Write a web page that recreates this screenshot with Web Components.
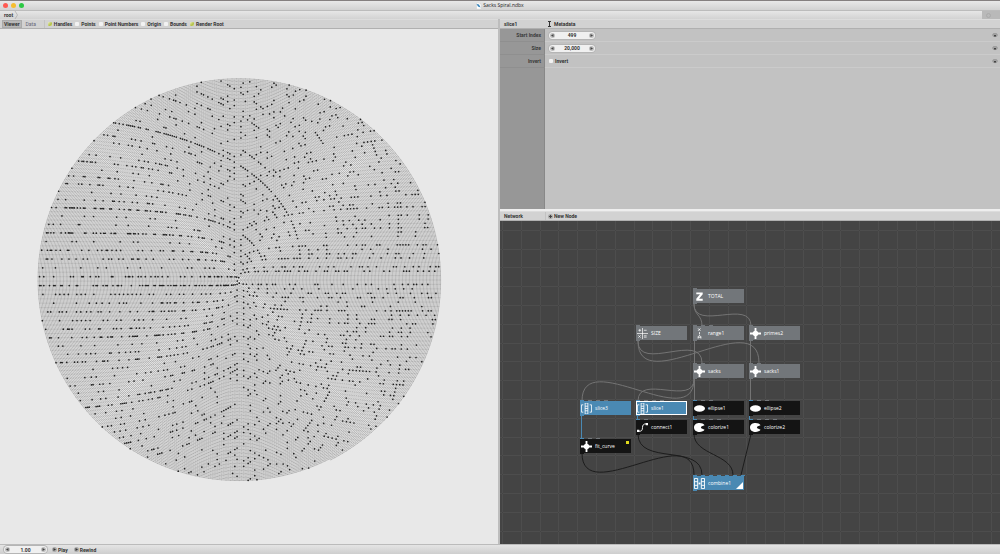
<!DOCTYPE html>
<html lang="en">
<head>
<meta charset="utf-8">
<title>Sacks Spiral.ndbx</title>
<style>
html, body { margin: 0; height: 100%; }
body { font: bold 5px/6px Roboto, sans-serif; color: #333; background: #e8e8e8; overflow: hidden; }
</style>
</head>
<body>
<nb-app></nb-app>
<script>
const define = (name, html, setup) => {
  const t = document.createElement('template');
  t.innerHTML = html;
  customElements.define(name, class extends HTMLElement {
    connectedCallback() {
      if (this.shadowRoot) return;
      this.attachShadow({ mode: 'open' }).append(t.content.cloneNode(true));
      if (setup) setup.call(this, this.shadowRoot);
    }
  });
};

define('nb-titlebar', `
<style>
:host { display: grid; grid-template-columns: 1fr auto 1fr; align-items: center; height: 9px; border-top: 1px solid #858080; background: linear-gradient(#e8e8e8, #d2d2d2); font: 5px/7px "Open Sans", sans-serif; color: #222; }
.lights { display: flex; gap: 3px; padding-left: 3px; }
button { width: 5px; height: 5px; padding: 0; border: 0; border-radius: 50%; background: #ff5a52; }
button:nth-child(2) { background: #f6bd2f; }
button:nth-child(3) { background: #2cc944; }
.t { display: flex; gap: 2px; align-items: center; }
</style>
<div class="lights"><button aria-label="Close"></button><button aria-label="Minimize"></button><button aria-label="Zoom"></button></div>
<div class="t"><svg width="5" height="6" viewBox="0 0 10 12"><path d="M1 0h6l3 3v9H1z" fill="#fff" stroke="#bbb" stroke-width=".6"/><path d="M1 2l5 1 3 6-5-2z" fill="#2f7fb8"/></svg><span><slot></slot></span></div>
<div></div>`);

define('nb-address', `
<style>
:host { display: flex; height: 9px; background: linear-gradient(#e6e6e6, #d2d2d2); border-top: 1px solid #bcbcbc; box-sizing: border-box; align-items: stretch; }
a { color: inherit; text-decoration: none; line-height: 8px; padding-left: 4px; }
svg { display: block; }
.sp { margin-left: auto; width: 18px; background: #b9b9b9; display: flex; align-items: center; }
.sp svg { margin-left: 4px; }
</style>
<a href="#root"><slot></slot></a>
<svg width="5" height="8" viewBox="0 0 5 8"><path d="M2 0L4.500 4L2 8" fill="none" stroke="#aaa" stroke-width=".7"/></svg>
<div class="sp"><svg width="5" height="5" viewBox="0 0 10 10"><circle cx="5" cy="5" r="4" fill="none" stroke="#a5a5a5" stroke-width="1.500"/></svg></div>`);

define('nb-header', `
<style>
:host { display: flex; align-items: center; height: 10px; box-sizing: border-box; background: #d2d2d2; border-top: 1px solid #dcdcdc; border-bottom: 1px solid #b0b0b0; }
</style><slot></slot>`);

define('nb-tab', `
<style>
:host { display: flex; align-self: stretch; }
button { font: inherit; font-weight: 400; color: #667; border: 0; padding: 0 4px; background: none; line-height: 8px; }
:host([on]) button { font-weight: bold; background: #b8b8b8; color: #333; outline: 1px solid #aaa; outline-offset: -1px; padding: 0 2px; }
</style><button><slot></slot></button>`);

define('nb-check', `
<style>
:host { display: flex; }
label { display: flex; align-items: center; gap: 2px; line-height: 7px; white-space: nowrap; }
input { appearance: none; margin: 0; width: 4px; height: 4px; background: #f2f2f2; border-radius: 1px; box-sizing: border-box; }
input:checked { background: linear-gradient(135deg, #eef0c8, #b4c24a 60%, #d6dd90); }
</style><label><input type="checkbox"><span><slot></slot></span></label>`,
function (r) { r.querySelector('input').checked = this.hasAttribute('on'); });

define('nb-number', `
<style>
:host { display: flex; width: 46px; height: 7px; border-radius: 4px; background: #f0f0f0; box-shadow: 0 0 0 1px #b5b5b5; align-items: center; box-sizing: border-box; padding: 0 1px; }
input { flex: 1; min-width: 0; border: 0; padding: 0; background: none; font: inherit; color: inherit; text-align: center; height: 7px; }
button { width: 5px; height: 5px; border: 0; padding: 0; border-radius: 50%; background: #bdbdbd; flex: none; display: grid; place-items: center; }
svg { display: block; }
</style>
<button aria-label="Decrease"><svg width="3" height="3" viewBox="0 0 3 3"><path d="M2.500 0v3L0 1.500z" fill="#444"/></svg></button>
<input type="text">
<button aria-label="Increase"><svg width="3" height="3" viewBox="0 0 3 3"><path d="M.5 0v3L3 1.500z" fill="#444"/></svg></button>`,
function (r) { const i = r.querySelector('input'); i.value = this.getAttribute('value'); i.setAttribute('aria-label', this.getAttribute('label')); });

define('nb-row', `
<style>
:host { display: grid; grid-template-columns: 45px 1fr 8px; height: 13px; align-items: stretch; }
.l { background: #979797; border-bottom: 1px solid #8f8f8f; color: #3a3a3a; text-align: right; padding-right: 3px; line-height: 13px; height: 12px; border-right: 1px solid #888; }
.c { display: flex; align-items: center; padding-left: 4px; }
.c, .e { border-bottom: 1px solid #cbcbcb; }
.e { display: flex; align-items: center; }
</style>
<div class="l"></div><div class="c"><slot></slot></div>
<div class="e"><svg width="6" height="5" viewBox="0 0 6 5"><ellipse cx="3" cy="2" rx="2.500" ry="1.700" fill="#a2a2a2" stroke="#8a8a8a" stroke-width=".5"/><path d="M2 2h2v1.500H2z" fill="#444"/></svg></div>`,
function (r) { r.querySelector('.l').textContent = this.getAttribute('label'); });

define('nb-spiral', `
<style>
:host { display: block; flex: 1; min-height: 0; }
div { height: 100%; box-sizing: border-box; display: flex; align-items: center; justify-content: center; padding: 0 20px 14px 0; background: #e8e8e8; }
svg { width: 406px; max-width: 100%; display: block; }
path { fill: none; stroke-linecap: round; }
</style>
<div><svg viewBox="-144 -144 288 288" role="img" aria-label="Sacks spiral">
<path id="line" stroke="#222" stroke-width=".16"/>
<path id="pts" stroke="#a6a6a6" stroke-width=".6"/>
<path id="primes" stroke="#222" stroke-width="1.200"/>
</svg></div>`,
function (r) {
  const N = 20499, composite = new Uint8Array(N + 1);
  let line = '', pts = '', primes = '';
  for (let n = 1; n <= N; n++) {
    const s = Math.sqrt(n), a = s * 2 * Math.PI;
    const p = (s * Math.cos(a)).toFixed(2) + ' ' + (s * Math.sin(a)).toFixed(2);
    line += (n === 1 ? 'M' : 'L') + p;
    pts += 'M' + p + 'h0';
    if (n > 1 && !composite[n]) {
      primes += 'M' + p + 'h0';
      for (let m = n * n; m <= N; m += n) composite[m] = 1;
    }
  }
  r.getElementById('line').setAttribute('d', line);
  r.getElementById('pts').setAttribute('d', pts);
  r.getElementById('primes').setAttribute('d', primes);
});

const ICONS = {
  z: '<path d="M5 3h14v4l-8 10h8v4H5v-4l8-10H5z" fill="#fff"/>',
  math: '<path d="M12 0v24M0 12h24" stroke-width="1.500"/><path d="M3 5h6M6 2v6M15 5h6M3 16l5 5M8 16l-5 5M15 17h6M15 20h6" stroke-width="1.500"/>',
  range: '<path d="M9 1l5 5M14 1l-5 5M12 9v5M9 23v-4l3-3 3 3v4M9 20h6" stroke-width="1.800"/>',
  star: '<circle cx="12" cy="12" r="6" fill="#fff"/><path d="M10 0h4v24h-4zM0 10h24v4H0z" fill="#fff"/>',
  slice: '<path d="M9 0h6v24H9zM9 7h6M9 12h6M9 17h6" stroke-width="1.800"/><path d="M5 4H1v16h4M19 4h4v16h-4" stroke-width="1.800"/>',
  ellipse: '<ellipse cx="12" cy="12" rx="12" ry="7" fill="#fff"/>',
  connect: '<path d="M3 20c7 1 9-2 9-8 0-5 2-8 8-8" stroke-width="2"/><path d="M0 17h5v5H0zM19 2h5v5h-5z" fill="#fff"/>',
  colorize: '<path d="M23 7C19 0 0 0 0 12s19 12 23 5l-8-4 1-3z" fill="#fff"/>',
  combine: '<path d="M1 1h7v22H1zM1 8h7M1 16h7M16 1h7v22h-7zM16 8h7M16 16h7" stroke-width="2"/><path d="M10 10h4v4h-4z" fill="#fff"/>'
};

define('nb-node', `
<style>
:host { display: flex; position: absolute; width: 51px; height: 14px; box-sizing: border-box; align-items: center; gap: 3px; padding-left: 1px; background: var(--c, #72767a); color: #fff; font: 5px/7px "Open Sans", sans-serif; }
:host([kind=geo]) { --c: #141414; }
:host([kind=list]) { --c: #4a89b3; }
:host([selected]) { outline: 1px solid #fff; outline-offset: -1px; }
.ports { position: absolute; left: 0; bottom: 100%; display: flex; gap: 4px; }
.ports i, .out { width: 4px; height: 1px; background: var(--p, #72767a); }
:host([kind]) .ports i:first-child { background: #4a89b3; }
.out { position: absolute; left: 0; top: 100%; background: var(--c, #72767a); }
.flag { position: absolute; right: 2px; top: 2px; width: 3px; height: 3px; background: #e0d91c; }
.render { position: absolute; right: 1px; bottom: 1px; }
svg { display: block; flex: none; }
.ic { fill: none; stroke: #fff; stroke-width: 1.500; }
.ic [fill] { stroke: none; }
</style>
<div class="ports"></div><svg class="ic" width="11" height="11" viewBox="0 0 24 24"></svg><span><slot></slot></span><div class="out"></div>`,
function (r) {
  r.querySelector('.ic').innerHTML = ICONS[this.getAttribute('icon')];
  r.querySelector('.ports').innerHTML = '<i></i>'.repeat(+this.getAttribute('in'));
  const [x, y] = this.getAttribute('at').split(',');
  this.style.left = x + 'px'; this.style.top = y + 'px';
  if (this.hasAttribute('flag')) r.append(Object.assign(document.createElement('div'), { className: 'flag' }));
  if (this.hasAttribute('render')) r.querySelector('.out').insertAdjacentHTML('afterend', '<svg class="render" width="7" height="7" viewBox="0 0 7 7"><path d="M7 0v7H0z" fill="#fff"/></svg>');
});

define('nb-network', `
<style>
:host { display: block; flex: 1; min-height: 0; position: relative; overflow: hidden; background: #444; }
#bg { position: absolute; inset: 0; width: 100%; height: 100%; }
.w { fill: none; stroke: #747474; stroke-width: 1; }
.k { fill: none; stroke: #1c1c1c; stroke-width: 1; }
.b { fill: none; stroke: #4a89b3; stroke-width: 1; }
</style>
<svg id="bg">
<defs><pattern id="g" x="2" y="9" width="94" height="94" patternUnits="userSpaceOnUse"><path d="M0 0h1v94H0zM19 0h1v94h-1zM38 0h1v94h-1zM56 0h1v94h-1zM75 0h1v94h-1zM0 0v1h94V0zM0 19v1h94v-1zM0 37v1h94v-1zM0 56v1h94v-1zM0 75v1h94v-1z" fill="#4d4d4d"/></pattern></defs>
<rect width="100%" height="100%" fill="url(#g)"/>
<g class="w">
<path d="M194 83C194 95 202 93 202 105M194 83C194 111 251 77 251 105"/>
<path d="M138 120C138 152 202 110 202 142M138 120C138 180 259 82 259 142"/>
<path d="M194.500 120V142M250.500 120V142M194.500 158V180M250.500 158V180"/>
<path d="M194 158C194 186 138 152 138 180M194 158C194 214 82 124 82 180"/>
</g>
<g class="b"><path d="M81.500 194V217M137.500 194V199M193.500 194V199M249.500 194V199"/></g>
<g class="k">
<path d="M138 213C138 245 202 222 202 254M194 213C194 234 233 233 233 254M251 213L241 254"/>
<path d="M82 232C82 288 194 198 194 254"/>
</g>
</svg><slot></slot>`);

define('nb-app', `
<style>
:host { display: flex; flex-direction: column; height: 100vh; }
main { flex: 1; min-height: 0; display: grid; grid-template-columns: minmax(0, 249fr) minmax(0, 251fr); }
section { display: flex; flex-direction: column; min-height: 0; }
.right { border-left: 2px solid #bdbdbd; }
.params { height: 190px; flex: none; display: flex; flex-direction: column; background: #c2c2c2; border-bottom: 2px solid #eee; }
.fill { flex: 1; display: grid; grid-template-columns: 45px 1fr; }
.fill i { background: #979797; border-right: 1px solid #888; }
.name { width: 45px; padding-left: 4px; box-sizing: border-box; }
.new { all: unset; display: flex; gap: 2px; align-items: center; padding-left: 3px; }
.new.add { padding-left: 2px; gap: 1px; }
.sep { width: 1px; height: 8px; background: #c2c2c2; margin: 0 3px 0 4px; }
nb-tab[on] { margin-left: 2px; }
nb-check + nb-check { margin-left: 3px; }
.end { border-left: 1px solid #c2c2c2; align-self: stretch; }
footer { height: 10px; box-sizing: border-box; display: flex; align-items: center; gap: 3px; padding-left: 4px; border-top: 1px solid #bbb; background: linear-gradient(#e4e4e4, #cecece); }
footer nb-number { width: 43px; margin-right: 2px; }
footer button { all: unset; display: flex; align-items: center; gap: 1px; margin-right: 3px; }
svg { display: block; }
</style>
<nb-titlebar>Sacks Spiral.ndbx</nb-titlebar>
<nb-address>root</nb-address>
<main>
<section>
<nb-header><nb-tab on>Viewer</nb-tab><nb-tab>Data</nb-tab><div class="sep"></div>
<nb-check on>Handles</nb-check><nb-check>Points</nb-check><nb-check>Point Numbers</nb-check><nb-check>Origin</nb-check><nb-check>Bounds</nb-check><nb-check on>Render Root</nb-check></nb-header>
<nb-spiral></nb-spiral>
</section>
<section class="right">
<div class="params">
<nb-header><span class="name">slice1</span><button class="new"><svg width="4" height="6" viewBox="0 0 4 6"><path d="M0 0h3v1H2v4h1v1H0V5h1V1H0z" fill="#333"/></svg>Metadata</button></nb-header>
<nb-row label="Start Index"><nb-number value="499" label="Start Index"></nb-number></nb-row>
<nb-row label="Size"><nb-number value="20,000" label="Size"></nb-number></nb-row>
<nb-row label="Invert"><nb-check>Invert</nb-check></nb-row>
<div class="fill"><i></i></div>
</div>
<nb-header><span class="name">Network</span><span class="end"></span><button class="new add"><svg width="5" height="5" viewBox="0 0 5 5"><circle cx="2.500" cy="2.500" r="2.500" fill="#aaa"/><path d="M2 1h1v3H2zM1 2h3v1H1z" fill="#444"/></svg>New Node</button></nb-header>
<nb-network>
<nb-node at="193,68" icon="z" in="1">TOTAL</nb-node>
<nb-node at="136,105" icon="math" in="1">SIZE</nb-node>
<nb-node at="193,105" icon="range" in="3">range1</nb-node>
<nb-node at="249,105" icon="star" in="1">primes2</nb-node>
<nb-node at="193,143" icon="star" in="2">sacks</nb-node>
<nb-node at="249,143" icon="star" in="2">sacks1</nb-node>
<nb-node at="80,180" icon="slice" in="4" kind="list">slice3</nb-node>
<nb-node at="136,180" icon="slice" in="4" kind="list" selected>slice1</nb-node>
<nb-node at="193,180" icon="ellipse" in="3" kind="geo">ellipse1</nb-node>
<nb-node at="249,180" icon="ellipse" in="3" kind="geo">ellipse2</nb-node>
<nb-node at="136,199" icon="connect" in="2" kind="geo">connect1</nb-node>
<nb-node at="193,199" icon="colorize" in="4" kind="geo">colorize1</nb-node>
<nb-node at="249,199" icon="colorize" in="4" kind="geo">colorize2</nb-node>
<nb-node at="80,218" icon="star" in="3" kind="geo" flag>fit_curve</nb-node>
<nb-node at="193,255" icon="combine" in="7" kind="list" render style="--p:#4a89b3">combine1</nb-node>
</nb-network>
</section>
</main>
<footer><nb-number value="1.00" label="Frame"></nb-number>
<button><svg width="5" height="5" viewBox="0 0 5 5"><circle cx="2.500" cy="2.500" r="2.500" fill="#aaa"/><path d="M1.500 1v3L4 2.500z" fill="#333"/></svg>Play</button>
<button><svg width="5" height="5" viewBox="0 0 5 5"><circle cx="2.500" cy="2.500" r="2.500" fill="#aaa"/><path d="M1.500 1v3L4 2.500z" fill="#333"/></svg>Rewind</button></footer>`);
</script>
</body>
</html>
